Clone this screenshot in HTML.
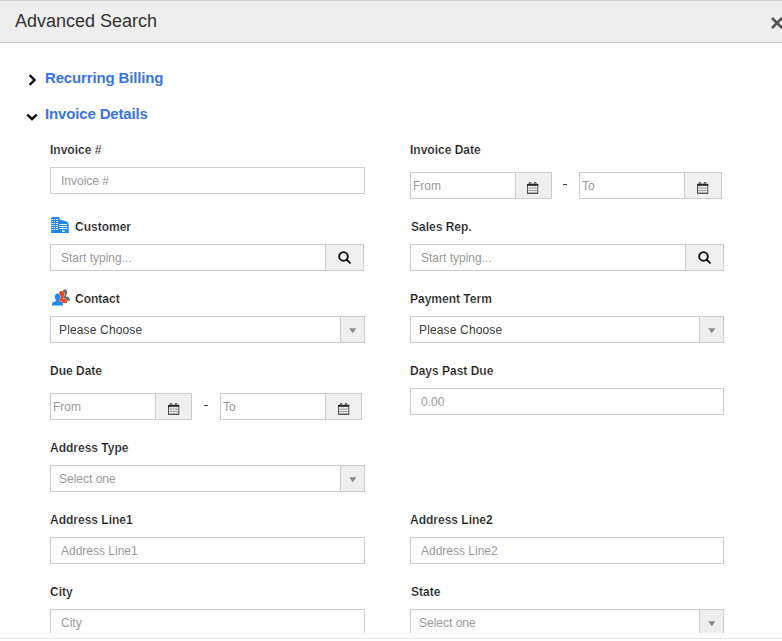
<!DOCTYPE html>
<html><head><meta charset="utf-8">
<style>
*{box-sizing:border-box;margin:0;padding:0}
html,body{width:782px;height:641px;overflow:hidden;background:#fff;font-family:"Liberation Sans",sans-serif;color:#333}
.abs{position:absolute}
#hdr{position:absolute;left:0;top:0;width:782px;height:43px;background:#eee;border-top:1px solid #d0d0d0;border-bottom:1px solid #c8c8c8}
#title{position:absolute;left:15px;top:9px;font-size:18px;line-height:22px;color:#333;white-space:nowrap}
#close{position:absolute;left:770px;top:12px;font-size:20px;font-weight:bold;color:#555;line-height:20px}
#body{position:absolute;left:0;top:0;width:782px;height:633px;overflow:hidden}
#foot{position:absolute;left:0;top:638px;width:782px;height:1px;background:#e3e3e3}
.sec{position:absolute;font-size:15px;font-weight:bold;color:#3a74e0;letter-spacing:-0.15px;white-space:nowrap;line-height:18px}
.lbl{position:absolute;font-size:12px;font-weight:bold;color:#1a1a1a;-webkit-text-stroke:0.2px #fff;white-space:nowrap;line-height:14px}
.inp{position:absolute;height:27px;border:1px solid #ccc;background:#fff;font-size:12px;color:#999;line-height:25px;padding-top:1px;padding-left:10px;white-space:nowrap;overflow:hidden}
.btn{position:absolute;height:27px;border:1px solid #ccc;background:#f0f0f0}
.sel{position:absolute;height:27px;border:1px solid #ccc;background:#fff;font-size:12px;color:#3a3a3a;line-height:25px;padding-top:1px;padding-left:8px;letter-spacing:0.15px;white-space:nowrap}
.dd{position:absolute;right:0;top:0;width:24px;height:25px;border-left:1px solid #ccc;background:#eee}

</style></head><body>
<div id="hdr"><div id="title">Advanced Search</div><svg class="abs" style="left:770px;top:14px" width="14" height="16" viewBox="0 0 14 16"><path d="M2 3 L12 13 M2 13 L12 3" stroke="#555" stroke-width="2.6" fill="none"/></svg></div>
<div id="body">
<div class="sec" style="left:45px;top:69px">Recurring Billing</div>
<div class="sec" style="left:45px;top:105px">Invoice Details</div>
<svg class="abs" style="left:27px;top:73px" width="12" height="14" viewBox="0 0 12 14"><path d="M2.6 2.2 L7.5 7 L2.6 11.8" fill="none" stroke="#111" stroke-width="2.4"/></svg>
<svg class="abs" style="left:25px;top:110px" width="14" height="12" viewBox="0 0 14 12"><path d="M2.2 4.6 L7 9 L11.8 4.6" fill="none" stroke="#111" stroke-width="2.4"/></svg>

<div class="lbl" style="left:50px;top:143px">Invoice #</div>
<div class="inp" style="left:50px;top:167px;width:315px">Invoice #</div>

<div class="lbl" style="left:410px;top:143px">Invoice Date</div>
<div class="inp" style="left:410px;top:172px;width:106px;padding-left:2px">From</div>
<div class="btn" style="left:515px;top:172px;width:37px"></div><svg class="abs" style="left:527px;top:182px" width="12" height="12" viewBox="0 0 12 12"><rect x="0.5" y="2.5" width="10.3" height="8.8" fill="#fff" stroke="#333" stroke-width="0.85"/><rect x="0.1" y="1.9" width="11.1" height="1.9" fill="#262626"/><path d="M1 6.1H10.5M1 8.5H10.5" stroke="#777" stroke-width="0.8"/><path d="M3.1 4V11M5.65 4V11M8.2 4V11" stroke="#bbb" stroke-width="0.7"/><path d="M0.5 11.2H10.8" stroke="#444" stroke-width="0.9"/><rect x="2.2" y="0.4" width="1.8" height="2.7" rx="0.8" fill="none" stroke="#262626" stroke-width="0.9"/><rect x="7.2" y="0.4" width="1.8" height="2.7" rx="0.8" fill="none" stroke="#262626" stroke-width="0.9"/></svg>
<div class="abs" style="left:563px;top:184px;width:4px;height:1px;background:#444"></div>
<div class="inp" style="left:579px;top:172px;width:106px;padding-left:2px">To</div>
<div class="btn" style="left:684px;top:172px;width:38px"></div><svg class="abs" style="left:697px;top:182px" width="12" height="12" viewBox="0 0 12 12"><rect x="0.5" y="2.5" width="10.3" height="8.8" fill="#fff" stroke="#333" stroke-width="0.85"/><rect x="0.1" y="1.9" width="11.1" height="1.9" fill="#262626"/><path d="M1 6.1H10.5M1 8.5H10.5" stroke="#777" stroke-width="0.8"/><path d="M3.1 4V11M5.65 4V11M8.2 4V11" stroke="#bbb" stroke-width="0.7"/><path d="M0.5 11.2H10.8" stroke="#444" stroke-width="0.9"/><rect x="2.2" y="0.4" width="1.8" height="2.7" rx="0.8" fill="none" stroke="#262626" stroke-width="0.9"/><rect x="7.2" y="0.4" width="1.8" height="2.7" rx="0.8" fill="none" stroke="#262626" stroke-width="0.9"/></svg>

<svg class="abs" style="left:50px;top:216px" width="20" height="18" viewBox="0 0 20 18"><path d="M1.3 2.3 Q1.3 1.1 2.6 1.1 L8.4 1.1 Q9.7 1.1 9.7 2.3 L9.7 3.6 L16.6 5.6 Q18.6 6.2 18.6 8 L18.6 15.8 L19 15.8 L19 17 L1 17 L1 15.8 L1.3 15.8 Z" fill="#1e88e8"/><g fill="#f2f8ff"><rect x="1.9" y="3" width="1.2" height="1"/><rect x="3.8" y="3" width="1.2" height="1"/><rect x="5.9" y="3" width="2" height="1"/><rect x="1.9" y="5" width="1.2" height="1"/><rect x="3.8" y="5" width="1.2" height="1"/><rect x="5.9" y="5" width="2" height="1"/><rect x="1.9" y="7" width="1.2" height="1"/><rect x="3.8" y="7" width="1.2" height="1"/><rect x="5.9" y="7" width="2" height="1"/><rect x="1.9" y="9" width="1.2" height="1"/><rect x="3.8" y="9" width="1.2" height="1"/><rect x="5.9" y="9" width="2" height="1"/><rect x="1.9" y="11" width="1.2" height="1"/><rect x="3.8" y="11" width="1.2" height="1"/><rect x="5.9" y="11" width="2" height="1"/><rect x="1.9" y="13" width="1.2" height="1"/><rect x="3.8" y="13" width="1.2" height="1"/><rect x="5.9" y="13" width="2" height="1"/><rect x="9.3" y="8" width="7.8" height="1"/><rect x="9.3" y="10" width="7.8" height="1"/><rect x="9.3" y="12" width="7.8" height="1"/><rect x="12.1" y="14.2" width="2.7" height="1.7"/></g></svg><div class="lbl" style="left:75px;top:220px">Customer</div>
<div class="inp" style="left:50px;top:244px;width:276px">Start typing...</div>
<div class="btn" style="left:325px;top:244px;width:39px"></div><svg class="abs" style="left:338px;top:251px" width="16" height="16" viewBox="0 0 16 16"><circle cx="5.5" cy="5.4" r="4.3" fill="none" stroke="#111" stroke-width="1.9"/><path d="M8.7 8.7 L12 11.9" stroke="#111" stroke-width="1.9" stroke-linecap="round"/></svg>

<div class="lbl" style="left:411px;top:220px">Sales Rep.</div>
<div class="inp" style="left:410px;top:244px;width:276px">Start typing...</div>
<div class="btn" style="left:685px;top:244px;width:39px"></div><svg class="abs" style="left:698px;top:251px" width="16" height="16" viewBox="0 0 16 16"><circle cx="5.5" cy="5.4" r="4.3" fill="none" stroke="#111" stroke-width="1.9"/><path d="M8.7 8.7 L12 11.9" stroke="#111" stroke-width="1.9" stroke-linecap="round"/></svg>

<svg class="abs" style="left:48px;top:286px" width="26" height="24" viewBox="0 0 26 24">
<path transform="translate(11.9 3.2) scale(0.9 0.96)" d="M5.5 0 C7.1 0 8.2 1.4 8.2 3.3 C8.2 4.7 7.6 5.9 6.8 6.5 L6.8 7.6 L8.3 7.9 C10.2 8.3 11 9.3 11 10.6 L11 12 L0 12 L0 10.6 C0 9.3 0.8 8.3 2.7 7.9 L4.2 7.6 L4.2 6.5 C3.4 5.9 2.8 4.7 2.8 3.3 C2.8 1.4 3.9 0 5.5 0 Z" fill="#6e6e6e"/>
<path transform="translate(8 5)" d="M5.5 0 C7.1 0 8.2 1.4 8.2 3.3 C8.2 4.7 7.6 5.9 6.8 6.5 L6.8 7.6 L8.3 7.9 C10.2 8.3 11 9.3 11 10.6 L11 12 L0 12 L0 10.6 C0 9.3 0.8 8.3 2.7 7.9 L4.2 7.6 L4.2 6.5 C3.4 5.9 2.8 4.7 2.8 3.3 C2.8 1.4 3.9 0 5.5 0 Z" fill="#f04818" stroke="#fff" stroke-width="0.7" paint-order="stroke"/>
<path transform="translate(4 7.6)" d="M5.5 0 C7.1 0 8.2 1.4 8.2 3.3 C8.2 4.7 7.6 5.9 6.8 6.5 L6.8 7.6 L8.3 7.9 C10.2 8.3 11 9.3 11 10.6 L11 12 L0 12 L0 10.6 C0 9.3 0.8 8.3 2.7 7.9 L4.2 7.6 L4.2 6.5 C3.4 5.9 2.8 4.7 2.8 3.3 C2.8 1.4 3.9 0 5.5 0 Z" fill="#1a8cf0" stroke="#fff" stroke-width="0.7" paint-order="stroke"/></svg><div class="lbl" style="left:75px;top:292px">Contact</div>
<div class="sel" style="left:50px;top:316px;width:315px">Please Choose<div class="dd"><svg style="position:absolute;left:0;top:0" width="24" height="25" viewBox="0 0 24 25"><path d="M8.2 11.3 L15.3 11.3 L11.75 16.2 Z" fill="#888"/></svg></div></div>

<div class="lbl" style="left:410px;top:292px">Payment Term</div>
<div class="sel" style="left:410px;top:316px;width:314px">Please Choose<div class="dd"><svg style="position:absolute;left:0;top:0" width="24" height="25" viewBox="0 0 24 25"><path d="M8.2 11.3 L15.3 11.3 L11.75 16.2 Z" fill="#888"/></svg></div></div>

<div class="lbl" style="left:50px;top:364px">Due Date</div>
<div class="inp" style="left:50px;top:393px;width:106px;padding-left:2px">From</div>
<div class="btn" style="left:155px;top:393px;width:37px"></div><svg class="abs" style="left:168px;top:403px" width="12" height="12" viewBox="0 0 12 12"><rect x="0.5" y="2.5" width="10.3" height="8.8" fill="#fff" stroke="#333" stroke-width="0.85"/><rect x="0.1" y="1.9" width="11.1" height="1.9" fill="#262626"/><path d="M1 6.1H10.5M1 8.5H10.5" stroke="#777" stroke-width="0.8"/><path d="M3.1 4V11M5.65 4V11M8.2 4V11" stroke="#bbb" stroke-width="0.7"/><path d="M0.5 11.2H10.8" stroke="#444" stroke-width="0.9"/><rect x="2.2" y="0.4" width="1.8" height="2.7" rx="0.8" fill="none" stroke="#262626" stroke-width="0.9"/><rect x="7.2" y="0.4" width="1.8" height="2.7" rx="0.8" fill="none" stroke="#262626" stroke-width="0.9"/></svg>
<div class="abs" style="left:204px;top:405px;width:4px;height:1px;background:#444"></div>
<div class="inp" style="left:220px;top:393px;width:106px;padding-left:2px">To</div>
<div class="btn" style="left:325px;top:393px;width:37px"></div><svg class="abs" style="left:338px;top:403px" width="12" height="12" viewBox="0 0 12 12"><rect x="0.5" y="2.5" width="10.3" height="8.8" fill="#fff" stroke="#333" stroke-width="0.85"/><rect x="0.1" y="1.9" width="11.1" height="1.9" fill="#262626"/><path d="M1 6.1H10.5M1 8.5H10.5" stroke="#777" stroke-width="0.8"/><path d="M3.1 4V11M5.65 4V11M8.2 4V11" stroke="#bbb" stroke-width="0.7"/><path d="M0.5 11.2H10.8" stroke="#444" stroke-width="0.9"/><rect x="2.2" y="0.4" width="1.8" height="2.7" rx="0.8" fill="none" stroke="#262626" stroke-width="0.9"/><rect x="7.2" y="0.4" width="1.8" height="2.7" rx="0.8" fill="none" stroke="#262626" stroke-width="0.9"/></svg>

<div class="lbl" style="left:410px;top:364px">Days Past Due</div>
<div class="inp" style="left:410px;top:388px;width:314px">0.00</div>

<div class="lbl" style="left:50px;top:441px">Address Type</div>
<div class="sel" style="left:50px;top:465px;width:315px;color:#999;letter-spacing:0">Select one<div class="dd"><svg style="position:absolute;left:0;top:0" width="24" height="25" viewBox="0 0 24 25"><path d="M8.2 11.3 L15.3 11.3 L11.75 16.2 Z" fill="#888"/></svg></div></div>

<div class="lbl" style="left:50px;top:513px">Address Line1</div>
<div class="inp" style="left:50px;top:537px;width:315px">Address Line1</div>
<div class="lbl" style="left:410px;top:513px">Address Line2</div>
<div class="inp" style="left:410px;top:537px;width:314px">Address Line2</div>

<div class="lbl" style="left:50px;top:585px">City</div>
<div class="inp" style="left:50px;top:609px;width:315px">City</div>
<div class="lbl" style="left:411px;top:585px">State</div>
<div class="sel" style="left:410px;top:609px;width:314px;color:#999;letter-spacing:0">Select one<div class="dd"><svg style="position:absolute;left:0;top:0" width="24" height="25" viewBox="0 0 24 25"><path d="M8.2 11.3 L15.3 11.3 L11.75 16.2 Z" fill="#888"/></svg></div></div>
</div>
<div id="foot"></div>
</body></html>
